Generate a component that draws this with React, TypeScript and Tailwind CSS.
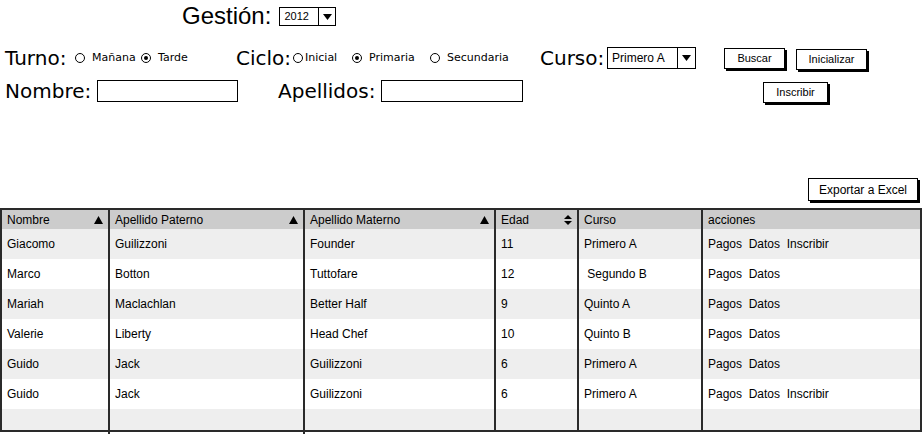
import React from "react";

type Row = {
  nombre: string;
  paterno: string;
  materno: string;
  edad: string;
  curso: string;
  acciones: string;
};

const rows: Row[] = [
  { nombre: "Giacomo", paterno: "Guilizzoni", materno: "Founder", edad: "11", curso: "Primero A", acciones: "Pagos  Datos  Inscribir" },
  { nombre: "Marco", paterno: "Botton", materno: "Tuttofare", edad: "12", curso: " Segundo B", acciones: "Pagos  Datos" },
  { nombre: "Mariah", paterno: "Maclachlan", materno: "Better Half", edad: "9", curso: "Quinto A", acciones: "Pagos  Datos" },
  { nombre: "Valerie", paterno: "Liberty", materno: "Head Chef", edad: "10", curso: "Quinto B", acciones: "Pagos  Datos" },
  { nombre: "Guido", paterno: "Jack", materno: "Guilizzoni", edad: "6", curso: "Primero A", acciones: "Pagos  Datos" },
  { nombre: "Guido", paterno: "Jack", materno: "Guilizzoni", edad: "6", curso: "Primero A", acciones: "Pagos  Datos  Inscribir" },
];

const cols = "grid grid-cols-[106px_195px_191px_83px_124px_1fr]";

function Radio({ label, checked, className = "", gap = "gap-[7px]" }: { label: string; checked?: boolean; className?: string; gap?: string }) {
  return (
    <span className={`flex items-center ${gap} text-[11px] font-['DejaVu_Sans',sans-serif] ${className}`}>
      <span className="w-[10px] h-[10px] shrink-0 rounded-full border-[1.5px] border-black flex items-center justify-center">
        {checked && <span className="w-[4px] h-[4px] rounded-full bg-black" />}
      </span>
      {label}
    </span>
  );
}

function Select({ value, w, h, arrowX, text }: { value: string; w: string; h: string; arrowX: string; text: string }) {
  return (
    <span className={`flex items-stretch border-[1.5px] border-black bg-white ${w} ${h}`}>
      <span className={`flex items-center pl-[4px] ${text} ${arrowX}`}>{value}</span>
      <span className="flex flex-1 items-center justify-center border-l-[1.5px] border-black">
        <svg width="9" height="6" viewBox="0 0 9 6">
          <path d="M0 0 L9 0 L4.5 6 Z" fill="#000" />
        </svg>
      </span>
    </span>
  );
}

function Btn({ label, className = "" }: { label: string; className?: string }) {
  return (
    <button
      className={`h-[21px] shrink-0 border-[1.5px] border-black bg-white text-[11px] shadow-[2px_2px_0_#000] flex items-center justify-center ${className}`}
    >
      {label}
    </button>
  );
}

function SortUp() {
  return (
    <svg width="9" height="8" viewBox="0 0 9 8">
      <path d="M0 8 L4.5 0 L9 8 Z" fill="#000" />
    </svg>
  );
}

function SortBoth() {
  return (
    <svg width="8" height="10" viewBox="0 0 8 10">
      <path d="M0 4 L4 0 L8 4 Z M0 6 L8 6 L4 10 Z" fill="#000" />
    </svg>
  );
}

const big = "text-[20px] shrink-0 font-['DejaVu_Sans',sans-serif]";

export default function App() {
  return (
    <div className="w-[924px] h-[434px] bg-white overflow-hidden text-black font-['Liberation_Sans',sans-serif] relative">
      <div className="h-[32px] flex items-center pl-[182px]">
        <span className="text-[24px] leading-[32px]">Gestión:</span>
        <span className="ml-[8px] mt-[1px]">
          <Select value="2012" w="w-[57px]" h="h-[19px]" arrowX="w-[38px]" text="text-[11px]" />
        </span>
      </div>

      <div className="mt-[12px] h-[28px] flex items-center pl-[5px]">
        <span className={`${big} w-[70px]`}>Turno:</span>
        <Radio label="Mañana" className="w-[66px]" />
        <Radio label="Tarde" checked className="w-[95px]" />
        <span className={`${big} w-[57px]`}>Ciclo:</span>
        <Radio label="Inicial" gap="gap-[2px]" className="w-[59px]" />
        <Radio label="Primaria" checked className="w-[78px]" />
        <Radio label="Secundaria" className="w-[110px]" />
        <span className={`${big} w-[67px]`}>Curso:</span>
        <Select value="Primero A" w="w-[89px]" h="h-[22px]" arrowX="w-[69px]" text="text-[12px]" />
        <Btn label="Buscar" className="ml-[28px] w-[61px]" />
        <Btn label="Inicializar" className="ml-[11px] w-[71px] mt-[3px]" />
      </div>

      <div className="mt-[5px] h-[28px] flex items-center pl-[5px]">
        <span className={`${big} w-[92px]`}>Nombre:</span>
        <span className="w-[141px] h-[22px] shrink-0 border-[1.5px] border-black" />
        <span className={`${big} ml-[40px] w-[103px]`}>Apellidos:</span>
        <span className="w-[142px] h-[22px] shrink-0 border-[1.5px] border-black" />
        <Btn label="Inscribir" className="ml-[240px] w-[65px] mt-[3px]" />
      </div>

      <div className="mt-[73px] h-[25px] flex justify-end pr-[6px]">
        <Btn label="Exportar a Excel" className="w-[110px] h-[23px] text-[12px]" />
      </div>

      <div className="mt-[5px] w-[922px] border-2 border-[#2a2a2a]">
        <div className={`${cols} h-[19px] bg-[#cccccc] text-[12px]`}>
          {[
            ["Nombre", <SortUp key="a" />],
            ["Apellido Paterno", <SortUp key="b" />],
            ["Apellido Materno", <SortUp key="c" />],
            ["Edad", <SortBoth key="d" />],
            ["Curso", null],
            ["acciones", null],
          ].map(([label, icon], i) => (
            <div
              key={i}
              className={`flex items-center justify-between pl-[5px] pr-[5px] ${i > 0 ? "border-l-2 border-[#2a2a2a]" : ""}`}
            >
              <span>{label}</span>
              {icon}
            </div>
          ))}
        </div>
        {rows.map((r, i) => (
          <div key={i} className={`${cols} h-[30px] text-[12px] ${i % 2 === 0 ? "bg-[#eeeeee]" : "bg-white"}`}>
            {[r.nombre, r.paterno, r.materno, r.edad, r.curso, r.acciones].map((c, j) => (
              <div
                key={j}
                className={`pl-[5px] pt-[6px] whitespace-pre ${j > 0 ? "border-l-2 border-[#2a2a2a]" : ""}`}
              >
                {c}
              </div>
            ))}
          </div>
        ))}
        <div className={`${cols} h-[21px] bg-[#eeeeee]`}>
          {[0, 1, 2, 3, 4, 5].map((j) => (
            <div key={j} className={j > 0 ? "border-l-2 border-[#2a2a2a]" : ""} />
          ))}
        </div>
      </div>
      <div className="ml-[108px] flex h-[4px]">
        <span className="w-[2px] bg-[#2a2a2a]" />
        <span className="ml-[193px] w-[2px] bg-[#2a2a2a]" />
      </div>
    </div>
  );
}
